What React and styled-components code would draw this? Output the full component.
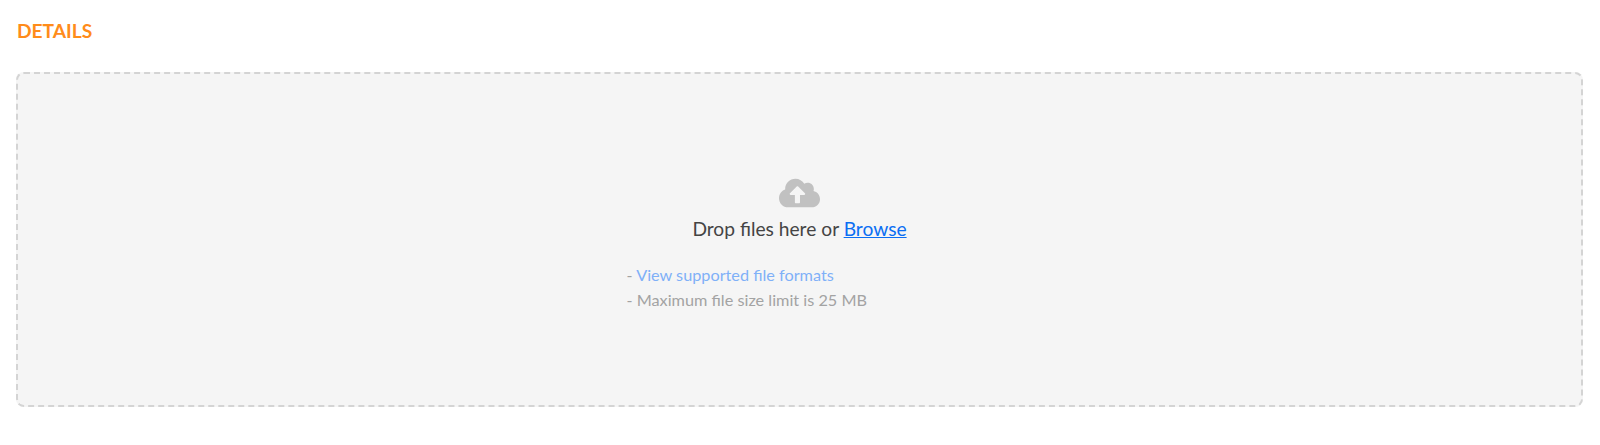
import React from "react";
import styled, { createGlobalStyle } from "styled-components";
import { FaCloudUploadAlt } from "react-icons/fa";

const GlobalStyle = createGlobalStyle`
  html, body, #root {
    margin: 0;
    padding: 0;
    background: #fff;
  }
  body {
    font-family: Lato, "Open Sans", sans-serif;
  }
`;

const Page = styled.div`
  padding: 20px 17px 38px 16px;
`;

const Title = styled.h2`
  margin: 0 0 31px 1px;
  font-size: 19.2px;
  line-height: 21px;
  font-weight: 700;
  color: #ff8c1a;
  text-transform: uppercase;
`;

const DropZone = styled.div`
  box-sizing: border-box;
  height: 335px;
  background: #f5f5f5;
  border: 2px dashed #d4d4d4;
  border-radius: 8px;
  display: flex;
  flex-direction: column;
  align-items: center;
  padding-top: 102px;
`;

const CloudIcon = styled(FaCloudUploadAlt)`
  display: block;
  width: 41px;
  height: 34px;
  color: #c1c1c1;
`;

const DropText = styled.p`
  margin: 6px 0 0;
  font-size: 19.2px;
  line-height: 26px;
  color: #444;
`;

const BrowseLink = styled.a`
  color: #0b6ef3;
  text-decoration: underline;
`;

const Hints = styled.ul`
  list-style: none;
  margin: 20px 0 0;
  padding: 0;
  width: 346px;
  font-size: 16.25px;
  line-height: 25px;
  color: #a3a3a3;
`;

const Hint = styled.li`
  margin: 0;
`;

const FormatsLink = styled.a`
  color: #7fb0f8;
  text-decoration: none;
`;

export default function App() {
  return (
    <>
      <GlobalStyle />
      <Page>
        <Title>Details</Title>
        <DropZone>
          <CloudIcon />
          <DropText>
            Drop files here or <BrowseLink href="#">Browse</BrowseLink>
          </DropText>
          <Hints>
            <Hint>
              - <FormatsLink href="#">View supported file formats</FormatsLink>
            </Hint>
            <Hint>- Maximum file size limit is 25 MB</Hint>
          </Hints>
        </DropZone>
      </Page>
    </>
  );
}
